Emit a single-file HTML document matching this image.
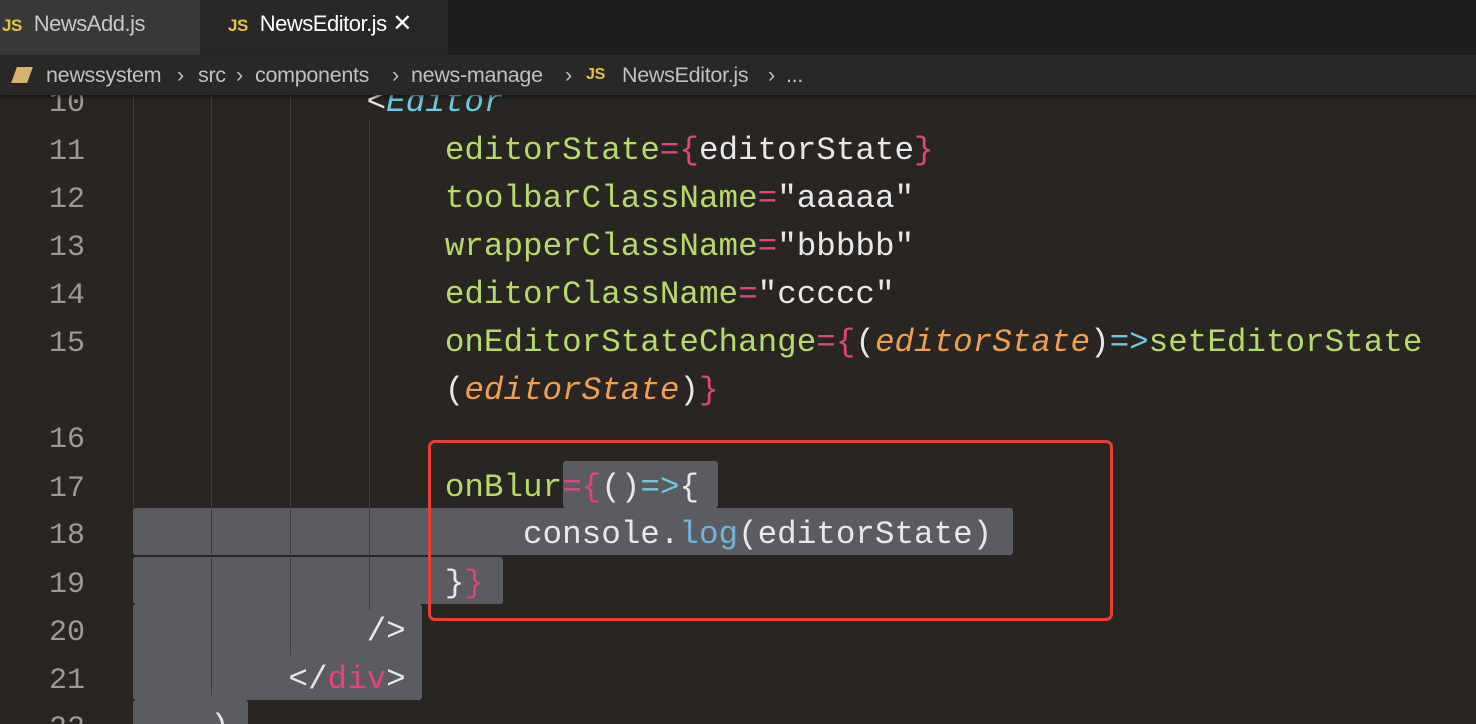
<!DOCTYPE html>
<html style="height:724px;overflow:hidden"><head><style>
body{margin:0;width:1476px;height:724px;overflow:hidden;background:#282523;position:relative;font-family:"Liberation Sans",sans-serif}
.tabs{position:absolute;left:0;top:0;width:1476px;height:55px;background:#1f1e1d}
.tab{position:absolute;top:0;height:55px;line-height:48px;font-size:22px;color:#c8c8c8;letter-spacing:-0.5px}
.js{color:#e5c342;font-weight:bold;font-size:17px;margin-right:12px}
.bc{position:absolute;left:0;top:55px;width:1476px;height:40px;background:#2a2826;color:#c0c0c0;font-size:21.5px;line-height:40px;box-shadow:0 2px 4px #0008;z-index:3;letter-spacing:-0.3px}
.bc span{position:absolute;top:0}
.code{position:absolute;left:0;top:3px;font-family:"Liberation Mono",monospace;font-size:32.6px;white-space:pre;color:#e8e8e8}
.ln{position:absolute;width:85px;text-align:right;color:#9a9a98;font-family:"Liberation Mono",monospace;font-size:30px;margin-top:6px}
.l{position:absolute;left:132px;line-height:48px;height:48px}
.sel{position:absolute;background:#5a5c61;border-radius:3px}
.g{position:absolute;width:1px;background:#403e3c}
.a{color:#b6da6a}.p{color:#e0457b}.o{color:#ee9f4f;font-style:italic}.c{color:#6ccbe0}.b{color:#6fb3d6}
</style></head><body>
<div class="tabs">
<div class="tab" style="left:0;width:200px;background:#3a3836;padding-left:2px;box-sizing:border-box"><span class="js">JS</span>NewsAdd.js</div>
<div class="tab" style="left:200px;width:248px;background:#2a2826;color:#fff;padding-left:28px;box-sizing:border-box"><span class="js">JS</span>NewsEditor.js <span style="font-size:24px">✕</span></div>
</div>
<div class="bc"><span style="width:16px;height:16px;top:12px;background:#d6b36a;left:14px;transform:skewX(-20deg)"></span>
<span style="left:46px">newssystem</span><span style="left:177px">›</span><span style="left:198px">src</span><span style="left:236px">›</span><span style="left:255px">components</span><span style="left:392px">›</span><span style="left:411px">news-manage</span><span style="left:565px">›</span><span class="js" style="left:586px;font-size:16px">JS</span><span style="left:622px">NewsEditor.js</span><span style="left:768px">›</span><span style="left:786px">...</span></div>

<div class="sel" style="left:563px;top:461px;width:155px;height:47px"></div>
<div class="sel" style="left:133px;top:508px;width:880px;height:47px"></div>
<div class="sel" style="left:133px;top:557px;width:370px;height:47px"></div>
<div class="sel" style="left:133px;top:604px;width:289px;height:96px"></div>
<div class="sel" style="left:133px;top:700px;width:115px;height:30px"></div>

<div class="g" style="left:133px;top:95px;height:414px"></div>
<div class="g" style="left:211px;top:95px;height:600px"></div>
<div class="g" style="left:290px;top:95px;height:560px"></div>
<div class="g" style="left:369px;top:120px;height:490px"></div>

<div class="code">
<div class="ln" style="top:78px">10</div>
<div class="ln" style="top:126px">11</div>
<div class="ln" style="top:174px">12</div>
<div class="ln" style="top:222px">13</div>
<div class="ln" style="top:270px">14</div>
<div class="ln" style="top:318px">15</div>
<div class="ln" style="top:414px">16</div>
<div class="ln" style="top:463px">17</div>
<div class="ln" style="top:510px">18</div>
<div class="ln" style="top:559px">19</div>
<div class="ln" style="top:607px">20</div>
<div class="ln" style="top:655px">21</div>
<div class="ln" style="top:703px">22</div>

<div class="l" style="top:76px">            &lt;<span class="c" style="font-style:italic">Editor</span></div>
<div class="l" style="top:124px">                <span class="a">editorState</span><span class="p">={</span>editorState<span class="p">}</span></div>
<div class="l" style="top:172px">                <span class="a">toolbarClassName</span><span class="p">=</span>"aaaaa"</div>
<div class="l" style="top:220px">                <span class="a">wrapperClassName</span><span class="p">=</span>"bbbbb"</div>
<div class="l" style="top:268px">                <span class="a">editorClassName</span><span class="p">=</span>"ccccc"</div>
<div class="l" style="top:316px">                <span class="a">onEditorStateChange</span><span class="p">={</span>(<span class="o">editorState</span>)<span class="c">=&gt;</span><span class="a">setEditorState</span></div>
<div class="l" style="top:364px">                (<span class="o">editorState</span>)<span class="p">}</span></div>
<div class="l" style="top:461px">                <span class="a">onBlur</span><span class="p">={</span>()<span class="c">=&gt;</span>{</div>
<div class="l" style="top:508px">                    console.<span class="b">log</span>(editorState)</div>
<div class="l" style="top:557px">                }<span class="p">}</span></div>
<div class="l" style="top:605px">            /&gt;</div>
<div class="l" style="top:653px">        &lt;/<span class="p">div</span>&gt;</div>
<div class="l" style="top:701px">    )</div>
</div>

<div style="position:absolute;left:428px;top:440px;width:679px;height:175px;border:3px solid #e8402f;border-radius:7px"></div>
</body></html>
